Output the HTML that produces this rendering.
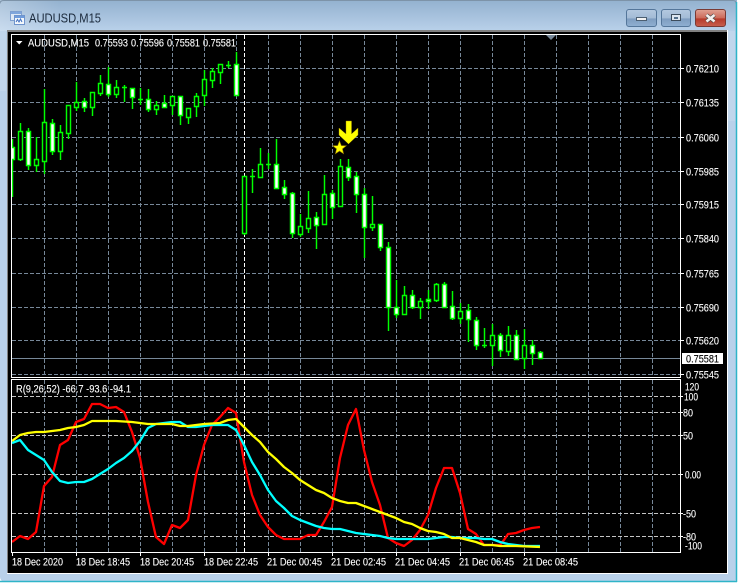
<!DOCTYPE html>
<html><head><meta charset="utf-8"><style>
html,body{margin:0;padding:0;background:#fff;width:738px;height:583px;overflow:hidden}
svg{position:absolute;left:0;top:0;display:block}
text{font-family:"Liberation Sans",sans-serif;font-size:11px;fill:#fff;stroke:#fff;stroke-width:.12;transform:translateY(.4px)}
</style></head><body>
<svg width="738" height="583" viewBox="0 0 738 583" xmlns="http://www.w3.org/2000/svg">
<defs>
<linearGradient id="t" x1="0" y1="0" x2="0" y2="1"><stop offset="0" stop-color="#93b1cf"/><stop offset="1" stop-color="#b9d1ea"/></linearGradient>
<linearGradient id="l" x1="0" y1="0" x2="1" y2="0"><stop offset="0" stop-color="#fff" stop-opacity=".25"/><stop offset="1" stop-color="#fff" stop-opacity="0"/></linearGradient>
<linearGradient id="b" x1="0" y1="0" x2="0" y2="1"><stop offset="0" stop-color="#b4c9e0"/><stop offset=".5" stop-color="#a3bbd6"/><stop offset=".55" stop-color="#7f9dc0"/><stop offset="1" stop-color="#8fb0d2"/></linearGradient>
<linearGradient id="c" x1="0" y1="0" x2="0" y2="1"><stop offset="0" stop-color="#e0a294"/><stop offset=".5" stop-color="#cc6a5a"/><stop offset=".55" stop-color="#b63a2a"/><stop offset="1" stop-color="#c8604e"/></linearGradient>
<clipPath id="mc"><rect x="12" y="35" width="668" height="342"/></clipPath>
</defs>

<!-- window frame -->
<rect x="0" y="0" width="737" height="582" rx="5" fill="#b9d1ea"/>
<rect x="0" y="0" width="737" height="31" fill="url(#t)"/>
<rect x="0" y="0" width="60" height="31" fill="url(#l)"/>
<path d="M0 3.5Q0 .5 4 .5H733Q736 .5 736 3.5" fill="none" stroke="#7d93a8"/>
<path d="M736.5 2V582M0 581.5H737" stroke="#2fb4c8" stroke-width="1.5" fill="none"/>
<rect x="0" y="31" width="6" height="60" fill="#fff" opacity=".12"/>
<rect x="727" y="31" width="8" height="90" fill="#fff" opacity=".12"/>

<!-- title icon -->
<rect x="10.5" y="11.5" width="11" height="9" fill="#dfe9f5" stroke="#7fa0d0"/>
<rect x="11" y="12" width="10" height="2" fill="#7fa6dc"/>
<rect x="14.5" y="15.5" width="10" height="9" fill="#f4f8fc" stroke="#6f94cc"/>
<rect x="15" y="16" width="9" height="2" fill="#6f9cdc"/>
<path d="M16 22l1.5-2.5 1.5 2.5 1.5-3 1.500 3" fill="none" stroke="#3f6fc0"/>
<text x="29" y="22" textLength="72" lengthAdjust="spacingAndGlyphs" style="font-size:12.5px;fill:#1b2a3c;stroke:none">AUDUSD,M15</text>

<!-- window buttons -->
<rect x="626.5" y="9.5" width="30" height="17" rx="2.5" fill="url(#b)" stroke="#54769a"/>
<rect x="636.5" y="17.5" width="10" height="3" fill="#f2f2f2" stroke="#4c5f72"/>
<rect x="661.5" y="9.5" width="29" height="17" rx="2.5" fill="url(#b)" stroke="#54769a"/>
<rect x="671.5" y="14.5" width="9" height="6" fill="#dde6f0" stroke="#3c4c5c"/>
<rect x="674" y="17" width="4" height="2" fill="#54708c"/>
<rect x="695.5" y="9.5" width="30" height="17" rx="2.5" fill="url(#c)" stroke="#7a3a34"/>
<path d="M706.5 15L714.5 21.5M714.5 15L706.5 21.5" stroke="#4a4a4a" stroke-width="4"/>
<path d="M706.5 15L714.5 21.5M714.5 15L706.5 21.5" stroke="#f4f0ee" stroke-width="2.6"/>

<!-- client -->
<rect x="7" y="30" width="721" height="544" fill="#fff"/>
<rect x="7" y="30" width="720" height="2" fill="#808080"/>
<rect x="7" y="30" width="1" height="543" fill="#808080"/>
<rect x="8" y="32" width="719" height="541" fill="#000"/>

<!-- grid main -->
<g fill="none" shape-rendering="crispEdges" stroke="#778899">
<path stroke-dasharray="4 2" d="M12 68.5H680M12 102.5H680M12 137.5H680M12 171.5H680M12 204.5H680M12 238.5H680M12 273.5H680M12 307.5H680M12 340.5H680M12 374.5H680"/>
<path stroke-dasharray="4 2" d="M44.5 35V377M76.5 35V377M108.5 35V377M140.5 35V377M172.5 35V377M204.5 35V377M236.5 35V377M268.5 35V377M300.5 35V377M332.5 35V377M364.5 35V377M396.5 35V377M428.5 35V377M460.5 35V377M492.5 35V377M524.5 35V377M556.5 35V377M588.5 35V377M620.5 35V377M652.5 35V377"/>
<path stroke-dasharray="4 2" d="M44.5 380V552M76.5 380V552M108.5 380V552M140.5 380V552M172.5 380V552M204.5 380V552M236.5 380V552M268.5 380V552M300.5 380V552M332.5 380V552M364.5 380V552M396.5 380V552M428.5 380V552M460.5 380V552M492.5 380V552M524.5 380V552M556.5 380V552M588.5 380V552M620.5 380V552M652.5 380V552"/>
<path stroke="#c4c4c4" stroke-dasharray="4 2" d="M12 396.5H680M12 412.5H680M12 435.5H680M12 474.5H680M12 513.5H680M12 536.5H680"/>
<path stroke="#fff" stroke-dasharray="4 2" d="M244.5 35V377M244.5 380V552"/>
<path stroke="#778899" d="M12 358.5H680"/>
</g>
<polygon points="546,35 556,35 551,40" fill="#778899"/>

<!-- candles -->
<g clip-path="url(#mc)" fill="none" stroke="#00ff00" stroke-width="1.45">
<path d="M12.5 139V197M20.5 123V161M28.5 128V170M36.5 137V172M44.5 89V174M52.5 119V155M60.5 125V160M68.5 105V139M76.5 82V111M84.5 98V112M92.5 92V116M100.5 75V96M108.5 67V97M116.5 80V98M124.5 85V102M132.5 88V109M140.5 88V105M148.5 89V112M156.5 101V115M164.5 95V107M172.5 96V115M180.5 96V125M188.5 108V124M196.5 93V117M204.5 70V106M212.5 68V88M220.5 64V84M228.5 61V68M236.5 52V95M244.5 176V235M252.5 169V193M260.5 148V177M268.5 153V169M276.5 139V188M284.5 180V199M292.5 192V238M300.5 214V237M308.5 191V233M316.5 212V249M324.5 175V225M332.5 190V219M340.5 159V207M348.5 159V181M356.5 172V213M364.5 188V258M372.5 196V231M380.5 224V251M388.5 242V331M396.5 280V318M404.5 286V314M412.5 290V309M420.5 298V319M428.5 290V309M436.5 283V302M444.5 282V307M452.5 291V320M460.5 303V324M468.5 304V342M476.5 317V350M484.5 328V348M492.5 324V366M500.5 333V357M508.5 326V356M516.5 330V360M524.5 329V369M532.5 340V365M540.5 351V358"/>
<path d="M122 87.5h5M138 99.5h5M226 65.5h5M250 176.5h5M266 164.5h5M482 345.5h5"/>
<path fill="#000" d="M18.5 131.5h4v28h-4zM34.5 159.5h4v6h-4zM42.5 122.5h4v39h-4zM58.5 132.5h4v19h-4zM66.5 105.5h4v28h-4zM74.5 102.5h4v5h-4zM90.5 92.5h4v15h-4zM98.5 83.5h4v10h-4zM114.5 87.5h4v7h-4zM154.5 105.5h4v4h-4zM170.5 96.5h4v9h-4zM186.5 108.5h4v9h-4zM194.5 96.5h4v10h-4zM202.5 79.5h4v16h-4zM210.5 71.5h4v9h-4zM218.5 64.5h4v8h-4zM242.5 176.5h4v57h-4zM258.5 164.5h4v13h-4zM298.5 226.5h4v8h-4zM306.5 218.5h4v10h-4zM322.5 194.5h4v30h-4zM338.5 166.5h4v40h-4zM370.5 224.5h4v3h-4zM402.5 295.5h4v19h-4zM418.5 301.5h4v6h-4zM434.5 284.5h4v16h-4zM458.5 311.5h4v7h-4zM490.5 335.5h4v10h-4zM506.5 335.5h4v16h-4zM522.5 345.5h4v13h-4z"/>
<path fill="#fff" d="M10.5 147.5h4v12h-4zM26.5 131.5h4v34h-4zM50.5 123.5h4v28h-4zM82.5 101.5h4v6h-4zM106.5 84.5h4v10h-4zM130.5 88.5h4v9h-4zM146.5 99.5h4v10h-4zM162.5 103.5h4v4h-4zM178.5 96.5h4v19h-4zM234.5 64.5h4v31h-4zM274.5 164.5h4v24h-4zM282.5 187.5h4v7h-4zM290.5 193.5h4v40h-4zM314.5 217.5h4v8h-4zM330.5 193.5h4v14h-4zM346.5 167.5h4v10h-4zM354.5 176.5h4v18h-4zM362.5 194.5h4v33h-4zM378.5 224.5h4v23h-4zM386.5 247.5h4v60h-4zM394.5 307.5h4v7h-4zM410.5 295.5h4v12h-4zM426.5 299.5h4v2h-4zM442.5 284.5h4v23h-4zM450.5 306.5h4v12h-4zM466.5 310.5h4v9h-4zM474.5 320.5h4v25h-4zM498.5 335.5h4v15h-4zM514.5 335.5h4v24h-4zM530.5 345.5h4v8h-4zM538.5 352.5h4v6h-4z"/>
</g>

<!-- arrow + star -->
<polygon points="346,121 351.5,121 351.5,134 358,128 358,135 348.5,144 339,135 339,128 346,134" fill="#ffff00" stroke="#a89000" stroke-width=".4"/>
<polygon points="339.5,141 341.3,145.6 346.2,145.8 342.4,148.9 343.6,153.7 339.5,151 335.4,153.7 336.6,148.9 332.8,145.8 337.7,145.6" fill="#ffff00" stroke="#a08000" stroke-width=".6"/>

<!-- indicator lines -->
<g fill="none" stroke-width="2.3" stroke-linejoin="round">
<polyline stroke="#ff0000" points="12,542 20,536 28,539 36,532 44,486 52,477 60,445 68,440 76,422 84,419 92,404 100,404 108,408 116,407 124,412 132,432 140,458 148,502 156,537 164,544 172,525 180,528 188,520 196,475 204,445 212,425 220,417 228,408 236,413 244,462 252,495 260,515 268,527 276,535 284,539 292,539 300,539 308,535 316,535 324,522 332,507 340,458 348,425 356,409 364,450 372,482 380,505 388,538 396,543 404,546 412,540 420,530 428,515 436,488 444,468 452,468 460,493 468,529 476,534 484,545 492,545 500,545 504,540 508,534 516,533 524,530 532,528 540,527"/>
<polyline stroke="#00ffff" points="12,443 20,440 28,450 36,455 44,460 52,472 60,481 68,483 76,482 84,482 92,479 100,474 108,469 116,463 124,458 132,451 140,441 148,428 156,424 164,423 172,422 180,422 188,427 196,427 204,426 212,425 220,425 228,425 236,430 244,445 252,462 260,475 268,490 276,501 284,508 292,516 300,520 308,523 316,526 324,528 332,529 340,529 348,531 356,533 364,534 372,535 380,536 388,538 396,539 404,539 412,539 420,539 428,539 436,538 444,537 452,537 460,538 468,538 476,538 484,539 492,539 500,542 508,544 516,545 524,546 540,546"/>
<polyline stroke="#ffff00" points="12,441 20,435 28,433 36,432 44,432 52,431 60,430 68,428 76,427 84,425 92,421 100,421 116,421 132,422 148,424 164,424 172,424 180,426 188,426 204,424 220,423 228,420 236,419 244,427 252,435 260,442 268,452 276,459 284,467 292,473 300,480 308,485 316,490 324,493 332,498 340,501 348,503 356,503 364,506 372,509 380,512 388,515 396,518 404,522 412,524 420,528 428,531 436,532 444,534 452,538 460,538 468,540 476,542 484,545 492,545 500,546 508,546 516,546 540,547"/>
</g>

<!-- frames -->
<g fill="none" stroke="#fff" shape-rendering="crispEdges">
<path d="M11.5 34.5H680.5V377.5H11.5Z"/>
<path d="M11.5 379.5H680.5V552.5H11.5Z"/>
<path d="M681 68.5h3M681 102.5h3M681 137.5h3M681 171.5h3M681 204.5h3M681 238.5h3M681 273.5h3M681 307.5h3M681 340.5h3M681 374.5h3M681 396.5h2M681 412.5h2M681 435.5h2M681 474.5h2M681 513.5h2M681 536.5h2"/>
<path d="M12.5 553v3M76.5 553v3M140.5 553v3M204.5 553v3M268.5 553v3M332.5 553v3M396.5 553v3M460.5 553v3M524.5 553v3"/>
</g>

<!-- header text -->
<polygon points="16,41 22.5,41 19.25,44.5" fill="#fff"/>
<text x="28" y="46" textLength="61" lengthAdjust="spacingAndGlyphs">AUDUSD,M15</text>
<text x="95" y="46" textLength="33" lengthAdjust="spacingAndGlyphs">0.75593</text>
<text x="131" y="46" textLength="33" lengthAdjust="spacingAndGlyphs">0.75596</text>
<text x="167" y="46" textLength="33" lengthAdjust="spacingAndGlyphs">0.75581</text>
<text x="203" y="46" textLength="33" lengthAdjust="spacingAndGlyphs">0.75581</text>
<text x="16" y="392" textLength="115" lengthAdjust="spacingAndGlyphs">R(9,26,52) -66.7 -93.6 -94.1</text>

<!-- price labels -->
<text x="686" y="72" textLength="33" lengthAdjust="spacingAndGlyphs">0.76210</text>
<text x="686" y="106" textLength="33" lengthAdjust="spacingAndGlyphs">0.76135</text>
<text x="686" y="141" textLength="33" lengthAdjust="spacingAndGlyphs">0.76060</text>
<text x="686" y="175" textLength="33" lengthAdjust="spacingAndGlyphs">0.75985</text>
<text x="686" y="208" textLength="33" lengthAdjust="spacingAndGlyphs">0.75915</text>
<text x="686" y="242" textLength="33" lengthAdjust="spacingAndGlyphs">0.75840</text>
<text x="686" y="277" textLength="33" lengthAdjust="spacingAndGlyphs">0.75765</text>
<text x="686" y="311" textLength="33" lengthAdjust="spacingAndGlyphs">0.75690</text>
<text x="686" y="344" textLength="33" lengthAdjust="spacingAndGlyphs">0.75620</text>
<text x="686" y="378" textLength="33" lengthAdjust="spacingAndGlyphs">0.75545</text>
<rect x="682" y="353" width="41" height="11" fill="#fff"/>
<text x="686" y="362" textLength="33" lengthAdjust="spacingAndGlyphs" style="fill:#000;stroke:#000">0.75581</text>

<!-- indicator labels -->
<text x="685" y="390" textLength="14" lengthAdjust="spacingAndGlyphs">120</text>
<text x="684" y="400" textLength="14" lengthAdjust="spacingAndGlyphs">100</text>
<text x="683" y="416" textLength="10" lengthAdjust="spacingAndGlyphs">80</text>
<text x="683" y="439" textLength="10" lengthAdjust="spacingAndGlyphs">50</text>
<text x="685" y="478" textLength="16" lengthAdjust="spacingAndGlyphs">0.00</text>
<text x="683" y="517" textLength="13" lengthAdjust="spacingAndGlyphs">-50</text>
<text x="683" y="540" textLength="13" lengthAdjust="spacingAndGlyphs">-80</text>
<text x="685" y="549" textLength="17" lengthAdjust="spacingAndGlyphs">-100</text>

<!-- time labels -->
<text x="12" y="565" textLength="51" lengthAdjust="spacingAndGlyphs">18 Dec 2020</text>
<text x="76" y="565" textLength="54" lengthAdjust="spacingAndGlyphs">18 Dec 18:45</text>
<text x="140" y="565" textLength="54" lengthAdjust="spacingAndGlyphs">18 Dec 20:45</text>
<text x="204" y="565" textLength="54" lengthAdjust="spacingAndGlyphs">18 Dec 22:45</text>
<text x="267" y="565" textLength="55" lengthAdjust="spacingAndGlyphs">21 Dec 00:45</text>
<text x="331" y="565" textLength="55" lengthAdjust="spacingAndGlyphs">21 Dec 02:45</text>
<text x="395" y="565" textLength="55" lengthAdjust="spacingAndGlyphs">21 Dec 04:45</text>
<text x="459" y="565" textLength="55" lengthAdjust="spacingAndGlyphs">21 Dec 06:45</text>
<text x="523" y="565" textLength="55" lengthAdjust="spacingAndGlyphs">21 Dec 08:45</text>
</svg>
</body></html>
